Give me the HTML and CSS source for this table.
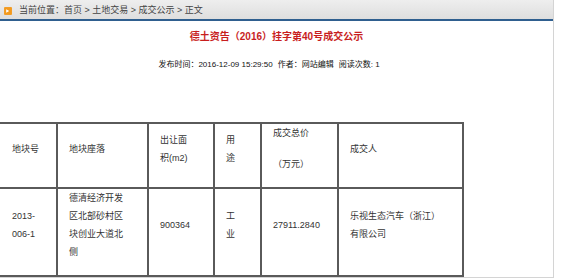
FILE: index.html
```html
<!DOCTYPE html>
<html lang="zh-CN">
<head>
<meta charset="utf-8">
<title>成交公示</title>
<link rel="stylesheet" href="styles.css">
</head>
<body>
<div class="page">
  <div class="crumb">
    <span class="crumb-icon"><svg width="8" height="8" viewBox="0 0 8 8"><rect x="0" y="0" width="8" height="8" rx="1" fill="#f0a030"/><rect x="0.5" y="0.5" width="7" height="7" rx="1" fill="#f39a1e"/><path d="M2.2 2.2 L5.2 4 L2.2 5.8 Z" fill="#fff"/></svg></span>
    <span>当前位置：首页 &gt; 土地交易 &gt; 成交公示 &gt; 正文</span>
  </div>
  <h1 class="title">德土资告（2016）挂字第40号成交公示</h1>
  <div class="meta">
    <span>发布时间：2016-12-09 15:29:50</span>
    <span>作者：网站编辑</span>
    <span>阅读次数: 1</span>
  </div>
  <table class="deal">
    <colgroup>
      <col class="w1"><col class="w2"><col class="w3"><col class="w4"><col class="w5"><col class="w6">
    </colgroup>
    <tr class="head">
      <td class="c1">地块号</td>
      <td class="c2">地块座落</td>
      <td class="c3">出让面积(m2)</td>
      <td class="c4">用途</td>
      <td class="c5"><span class="line">成交总价</span><span class="line gap">（万元）</span></td>
      <td class="c6">成交人</td>
    </tr>
    <tr class="body">
      <td class="c1">2013-<wbr>006-1</td>
      <td class="c2">德清经济开发区北部砂村区块创业大道北侧</td>
      <td class="c3">900364</td>
      <td class="c4">工业</td>
      <td class="c5">27911.2840</td>
      <td class="c6">乐视生态汽车（浙江）有限公司</td>
    </tr>
  </table>
</div>
</body>
</html>
```

FILE: styles.css
```css
html, body {
  margin: 0;
  padding: 0;
  background: #fff;
}
body {
  font-family: "Liberation Sans", "Noto Sans CJK SC", sans-serif;
  color: #333;
  overflow: hidden;
}
.page {
  width: 553px;
  border-right: 1px solid #d4d4d4;
  border-bottom: 1px solid #d4d4d4;
  box-sizing: content-box;
}
.crumb {
  height: 19px;
  background: linear-gradient(#eeeeee, #dedede);
  border-bottom: 2px solid #2f5f8f;
  display: flex;
  align-items: center;
  gap: 7px;
  padding-left: 4px;
  font-size: 9px;
  color: #444;
  box-sizing: content-box;
}
.crumb-icon {
  display: flex;
  width: 8px;
  height: 8px;
  margin-top: 2px;
}
.title {
  margin: 9px 0 0;
  text-align: center;
  font-size: 10px;
  line-height: 14px;
  font-weight: bold;
  color: #c81e1e;
}
.meta {
  margin-top: 15px;
  display: flex;
  justify-content: center;
  gap: 5px;
  padding-right: 15px;
  font-size: 8px;
  line-height: 12px;
  color: #111;
}
.deal {
  margin: 51px 0 0 -2px;
  border-collapse: collapse;
  table-layout: fixed;
  width: 466px;
  font-size: 9px;
  line-height: 18px;
  color: #333;
}
.deal td {
  border: 2px solid #5a5a5a;
  padding: 0 0 14px 11px;
  vertical-align: middle;
  word-break: normal;
}
.deal .head td { height: 48px; }
.deal .body td { height: 70px; }
.w1 { width: 58px; }
.w2 { width: 91px; }
.w3 { width: 66px; }
.w4 { width: 47px; }
.w5 { width: 77px; }
.w6 { width: 125px; }
.deal .c1 { padding-left: 12px; padding-right: 12px; }
.deal .c2 { padding-right: 20px; }
.deal .c3 { padding-right: 21px; }
.deal .c4 { padding-right: 20px; }
.deal .c5 { padding-right: 9px; }
.deal .c6 { padding-right: 18px; }
.line { display: block; }
.line.gap { margin-top: 13px; }
```
